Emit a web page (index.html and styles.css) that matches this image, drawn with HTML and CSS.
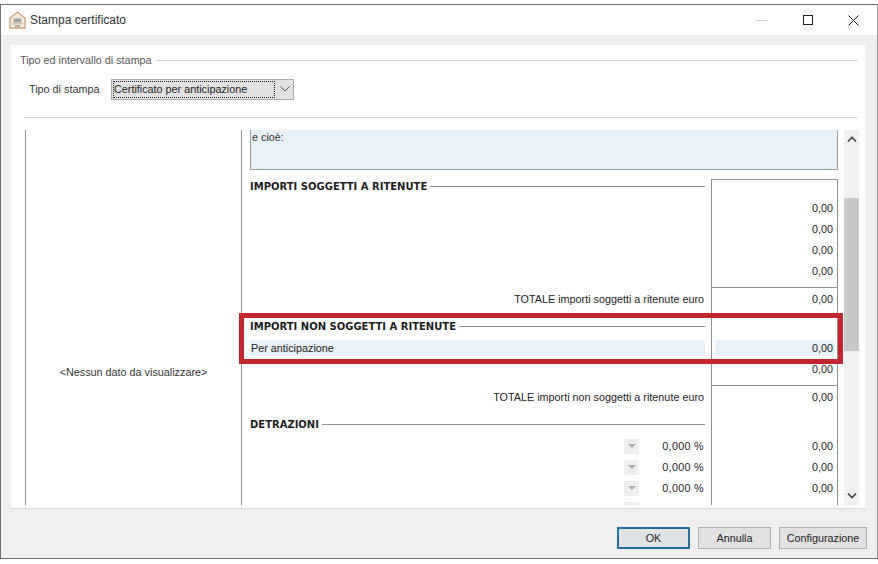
FILE: index.html
```html
<!DOCTYPE html>
<html lang="it">
<head>
<meta charset="utf-8">
<title>Stampa certificato</title>
<link rel="stylesheet" href="styles.css">
</head>
<body>
<div class="dialog">
  <header class="titlebar">
    <svg class="app-icon" width="17" height="18" viewBox="0 0 17 18">
      <path d="M1 7 8.500 1 16 7v10H1z" fill="#f8eddf" stroke="#c9a273" stroke-width="1.300"/>
      <rect x="4.500" y="7.500" width="8" height="4" fill="#a3a19b"/>
      <rect x="3.500" y="11.500" width="10" height="2" fill="#cfc6b6"/>
      <rect x="6" y="14" width="5" height="2" fill="#b5ad9f"/>
    </svg>
    <span class="title">Stampa certificato</span>
    <div class="winbtns">
      <svg width="12" height="12" viewBox="0 0 12 12"><path d="M0 6.500h12" stroke="#d8d8d8"/></svg>
      <svg width="10" height="10" viewBox="0 0 10 10"><rect x=".5" y=".5" width="9" height="9" fill="none" stroke="#222"/></svg>
      <svg width="11" height="11" viewBox="0 0 11 11"><path d="M.5.500l10 10M10.500.500l-10 10" stroke="#222" fill="none"/></svg>
    </div>
  </header>
  <main class="body">
    <section class="panel">
      <div class="legend"><span>Tipo ed intervallo di stampa</span><i class="rule"></i></div>
      <div class="type-row">
        <span class="type-label">Tipo di stampa</span>
        <div class="combo">
          <span class="combo-value">Certificato per anticipazione</span>
          <svg width="10" height="6" viewBox="0 0 10 6"><path d="M.5.500 5 5 9.500.500" fill="none" stroke="#555"/></svg>
        </div>
      </div>
      <div class="sep"></div>
      <div class="workspace">
        <div class="empty-list">&lt;Nessun dato da visualizzare&gt;</div>
        <div class="detail">
          <div class="sheet">
            <div class="note">e cioè:</div>
            <div class="sheet-grid">
              <div class="values-col"></div>

              <div class="group g-sogg">
                <div class="heading"><b>IMPORTI SOGGETTI A RITENUTE</b><i class="rule dark"></i></div>
              </div>
              <div class="val v1">0,00</div>
              <div class="val v2">0,00</div>
              <div class="val v3">0,00</div>
              <div class="val v4">0,00</div>
              <div class="total t1">TOTALE importi soggetti a ritenute euro</div>
              <div class="val v5 ruled">0,00</div>

              <div class="group g-non">
                <div class="heading"><b>IMPORTI NON SOGGETTI A RITENUTE</b><i class="rule dark"></i></div>
                <div class="hl-row">Per anticipazione</div>
              </div>
              <div class="val v6 hl-val">0,00</div>
              <div class="val v7">0,00</div>
              <div class="total t2">TOTALE importi non soggetti a ritenute euro</div>
              <div class="val v8 ruled">0,00</div>

              <div class="group g-det">
                <div class="heading"><b>DETRAZIONI</b><i class="rule dark"></i></div>
              </div>
              <div class="pct p1"><span class="spin"><i></i></span><span class="pct-num">0,000 %</span></div>
              <div class="val v9">0,00</div>
              <div class="pct p2"><span class="spin"><i></i></span><span class="pct-num">0,000 %</span></div>
              <div class="val v10">0,00</div>
              <div class="pct p3"><span class="spin"><i></i></span><span class="pct-num">0,000 %</span></div>
              <div class="val v11">0,00</div>
              <div class="pct p4"><span class="spin"><i></i></span><span class="pct-num">0,000 %</span></div>
              <div class="val v12">0,00</div>
            </div>
          </div>
          <div class="scrollbar">
            <svg width="10" height="7" viewBox="0 0 10 7"><path d="M1 5.500 5 1.500l4 4" fill="none" stroke="#444" stroke-width="1.600"/></svg>
            <div class="track"><div class="thumb"></div></div>
            <svg width="10" height="7" viewBox="0 0 10 7"><path d="M1 1.500l4 4 4-4" fill="none" stroke="#444" stroke-width="1.600"/></svg>
          </div>
        </div>
      </div>
    </section>
    <footer class="actions">
      <button class="btn primary" type="button">OK</button>
      <button class="btn" type="button">Annulla</button>
      <button class="btn config" type="button">Configurazione</button>
    </footer>
  </main>
  <div class="highlight"></div>
</div>
</body>
</html>
```
FILE: styles.css
```css
* { box-sizing: border-box; }
html, body { margin: 0; height: 100%; }
body {
  width: 878px;
  height: 564px;
  overflow: hidden;
  background: #fff;
  font-family: "Liberation Sans", Arial, sans-serif;
  font-size: 10.8px;
  color: #222;
  padding-top: 4px;
}
.dialog {
  position: relative;
  width: 878px;
  height: 555px;
  border: 1px solid #6e6e6e;
  border-right: 1px solid #999;
  display: flex;
  flex-direction: column;
  background: #fff;
}
.titlebar {
  height: 30px;
  flex: none;
  display: flex;
  align-items: center;
  padding-left: 8px;
  background: #fff;
}
.title { margin-left: 4px; font-size: 12px; color: #333; }
.winbtns {
  margin-left: auto;
  width: 121px;
  padding-right: 18px;
  display: flex;
  align-items: center;
  justify-content: space-between;
}
.body {
  flex: 1;
  min-height: 0;
  background: #efefef;
  padding: 10px 10px 0;
  display: flex;
  flex-direction: column;
}
.panel {
  height: 464px;
  flex: none;
  width: 854px;
  background: #fff;
  border-bottom: 1px solid #d9d9d9;
  padding: 0 0 0 9px;
  display: flex;
  flex-direction: column;
  overflow: hidden;
}
.legend {
  height: 30px;
  flex: none;
  display: flex;
  align-items: center;
  gap: 5px;
  color: #555;
  padding-right: 7px;
}
.rule { flex: 1; height: 1px; background: #d0d0d0; display: block; }
.rule.dark { background: #8f8f8f; }
.type-row {
  height: 27px;
  flex: none;
  display: flex;
  align-items: center;
  padding-left: 9px;
  padding-top: 1px;
}
.type-label { width: 82px; color: #333; }
.combo {
  width: 183px;
  height: 21px;
  background: #e1e1e1;
  border: 1px solid #adadad;
  display: flex;
  align-items: center;
  padding: 1px 3px 1px 1px;
  justify-content: space-between;
}
.combo-value {
  width: 162px;
  height: 17px;
  line-height: 14px;
  outline: 1px dotted #222;
  outline-offset: -1px;
  padding: 1px 0 0 1px;
  color: #222;
}
.sep {
  flex: none;
  height: 1px;
  margin: 15px 8px 0 4px;
  background: #d0d0d0;
}
.workspace {
  flex: 1;
  min-height: 0;
  display: flex;
  padding: 12px 0 3px 5px;
}
.empty-list {
  width: 217px;
  flex: none;
  border-left: 1px solid #8f8f8f;
  border-right: 1px solid #8f8f8f;
  display: flex;
  align-items: center;
  justify-content: center;
  color: #333;
  padding-top: 108px;
}
.detail { flex: 1; min-width: 0; display: flex; overflow: hidden; }
.sheet { width: 600px; height: 375px; flex: none; padding-left: 8px; overflow: hidden; }
.note {
  width: 588px;
  height: 40px;
  background: #e8f0f8;
  border: 1px solid #9a9a9a;
  border-top: 0;
  padding: 1px 0 0 1px;
  color: #333;
}
.sheet-grid {
  display: grid;
  grid-template-columns: 461px 127px;
  width: 588px;
  margin-top: 9px;
  grid-template-rows: 19px 21px 21px 21px 21px 5px 21px 32px 18px 21px 6px 21px 30px 21px 21px 21px 21px;
}
.values-col {
  grid-column: 2;
  grid-row: 1 / -1;
  border: 1px solid #8f8f8f;
  border-bottom: 0;
}
.group { grid-column: 1; }
.heading { height: 14px; display: flex; align-items: center; gap: 3px; padding-right: 6px; }
.heading b { color: #1e1e1e; font-family: "DejaVu Sans", sans-serif; font-size: 10px; }
.val {
  grid-column: 2;
  text-align: right;
  padding: 3px 5px 0 0;
  line-height: 14px;
}
.total {
  grid-column: 1;
  text-align: right;
  padding: 5px 7px 0 0;
  line-height: 14px;
}
.ruled { border-top: 1px solid #8f8f8f; padding-top: 4px; }
.g-sogg { grid-row: 1; }
.v1 { grid-row: 2; } .v2 { grid-row: 3; } .v3 { grid-row: 4; } .v4 { grid-row: 5; }
.t1 { grid-row: 7; } .v5 { grid-row: 7; }
.g-non { grid-row: 8 / 10; padding-top: 11px; }
.hl-row {
  margin: 7px 6px 0 0;
  height: 16px;
  background: #e8f0f8;
  line-height: 16px;
  padding-left: 1px;
}
.v6 { grid-row: 9; }
.hl-val {
  background: #e8f0f8;
  margin: 0 3px 0 4px;
  height: 16px;
  padding: 0 2px 0 0;
  line-height: 16px;
}
.v7 { grid-row: 10; padding-top: 4px; }
.t2 { grid-row: 12; } .v8 { grid-row: 12; }
.g-det { grid-row: 13; padding-top: 11px; }
.v9 { grid-row: 14; } .v10 { grid-row: 15; } .v11 { grid-row: 16; } .v12 { grid-row: 17; }
.pct {
  grid-column: 1;
  display: flex;
  justify-content: flex-end;
  align-items: center;
  padding: 0 7px 1px 0;
  line-height: 14px;
}
.pct-num { width: 65px; text-align: right; letter-spacing: .3px; }
.p1 { grid-row: 14; } .p2 { grid-row: 15; } .p3 { grid-row: 16; } .p4 { grid-row: 17; }
.spin {
  width: 15px;
  height: 15px;
  background: #efefef;
  display: flex;
  align-items: center;
  justify-content: center;
}
.spin i {
  display: block;
  width: 0;
  height: 0;
  border-left: 4px solid transparent;
  border-right: 4px solid transparent;
  border-top: 4px solid #a8a8a8;
}
.scrollbar {
  width: 15px;
  margin-left: 2px;
  flex: none;
  background: #f0f0f0;
  display: flex;
  flex-direction: column;
  align-items: center;
  padding: 6px 0;
  height: 375px;
}
.track { flex: 1; width: 100%; margin: 5px 0; position: relative; }
.thumb { position: absolute; top: 50px; left: 0; right: 0; height: 153px; background: #c8c8c8; }
.actions {
  flex: 1;
  display: flex;
  justify-content: flex-end;
  align-items: flex-start;
  gap: 8px;
  padding-top: 18px;
}
.btn {
  font: inherit;
  color: #222;
  height: 22px;
  width: 73px;
  background: #e1e1e1;
  border: 1px solid #adadad;
  padding: 0;
}
.btn.primary { background: #dfe3e6; border: 2px solid #1f6f9f; }
.btn.config { width: 88px; }
.highlight {
  position: absolute;
  left: 238px;
  top: 308px;
  width: 604px;
  height: 51px;
  border: 5px solid #c4262e;
  pointer-events: none;
}
```
